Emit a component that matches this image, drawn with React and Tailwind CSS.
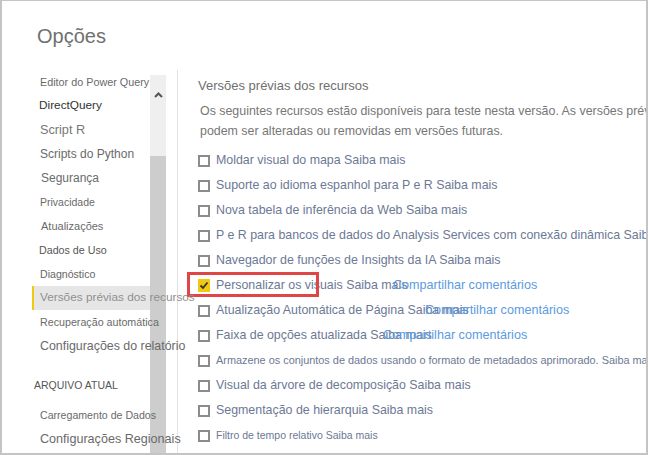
const navItems = [
  { label: 'Editor do Power Query', cls: 'text-[10.8px] text-[#6a6a6a] pl-[8px]' },
  { label: 'DirectQuery', cls: 'text-[11.8px] text-[#333] pl-[7px]' },
  { label: 'Script R', cls: 'text-[12.7px] text-[#777] pl-[8px]' },
  { label: 'Scripts do Python', cls: 'text-[12px] text-[#6a6a6a] pl-[8px]' },
  { label: 'Segurança', cls: 'text-[12px] text-[#6a6a6a] pl-[9px]' },
  { label: 'Privacidade', cls: 'text-[10.5px] text-[#6a6a6a] pl-[8px]' },
  { label: 'Atualizações', cls: 'text-[11px] text-[#6a6a6a] pl-[9px]' },
  { label: 'Dados de Uso', cls: 'text-[10.7px] text-[#555] pl-[7px]' },
  { label: 'Diagnóstico', cls: 'text-[10.6px] text-[#666] pl-[8px]' },
  { label: 'Versões prévias dos recursos', cls: 'text-[11.8px] text-[#909090] pl-[6px]', selected: true },
  { label: 'Recuperação automática', cls: 'text-[10.7px] text-[#6a6a6a] pl-[8px]' },
  { label: 'Configurações do relatório', cls: 'text-[12.4px] text-[#6a6a6a] pl-[8px]' },
];

const features = [
  { label: 'Moldar visual do mapa Saiba mais' },
  { label: 'Suporte ao idioma espanhol para P e R Saiba mais' },
  { label: 'Nova tabela de inferência da Web Saiba mais' },
  { label: 'P e R para bancos de dados do Analysis Services com conexão dinâmica Saiba mais' },
  { label: 'Navegador de funções de Insights da IA Saiba mais' },
  { label: 'Personalizar os visuais Saiba mais', checked: true, link: 'left-[215px]', highlight: true },
  { label: 'Atualização Automática de Página Saiba mais', link: 'left-[247px]' },
  { label: 'Faixa de opções atualizada Saiba mais', link: 'left-[205px]' },
  { label: 'Armazene os conjuntos de dados usando o formato de metadados aprimorado. Saiba mais', small: 'text-[10.9px]' },
  { label: 'Visual da árvore de decomposição Saiba mais' },
  { label: 'Segmentação de hierarquia Saiba mais' },
  { label: 'Filtro de tempo relativo Saiba mais', small: 'text-[10.5px]' },
];

function Checkbox({ checked }) {
  if (checked) {
    return (
      <span className="w-[12px] h-[13px] bg-[#f2c811] flex items-center justify-center shrink-0">
        <svg width="10" height="9" viewBox="0 0 10 9">
          <path d="M1.5 4.5 L4 7 L8.5 1.5" fill="none" stroke="#333" strokeWidth="1.8" />
        </svg>
      </span>
    );
  }
  return <span className="w-[12px] h-[12px] border-2 border-[#8c8c8c] bg-white shrink-0" />;
}

export default function App() {
  return (
    <div className="w-[648px] h-[455px] bg-white border-t border-l-2 border-r-2 border-b-2 border-[#c4c4c4] overflow-hidden font-['Liberation_Sans',Arial,sans-serif]">
      {/* Title */}
      <div className="h-[69px] pl-[35px] pt-[25px]">
        <h1 className="text-[20px] leading-[20px] text-[#707070]">Opções</h1>
      </div>

      <div className="flex h-[383px]">
        {/* Left nav */}
        <div className="w-[175px] flex shrink-0">
          <div className="ml-[30px] w-[118px] relative z-10">
            {navItems.map((item) => (
              <div
                key={item.label}
                className={`h-6 flex items-center whitespace-nowrap leading-none ${item.cls} ${
                  item.selected ? 'bg-[#e6e6e6] border-l-2 border-[#f2c811]' : ''
                }`}
              >
                {item.label}
              </div>
            ))}
            <div className="mt-[15px] h-6 flex items-center pl-[2px] text-[10.5px] leading-none text-[#555] whitespace-nowrap">
              ARQUIVO ATUAL
            </div>
            <div className="mt-[6px] h-6 flex items-center pl-[8px] text-[10.6px] leading-none text-[#6a6a6a] whitespace-nowrap">
              Carregamento de Dados
            </div>
            <div className="h-6 flex items-center pl-[8px] text-[12.6px] leading-none text-[#6a6a6a] whitespace-nowrap">
              Configurações Regionais
            </div>
          </div>

          {/* Scrollbar */}
          <div className="w-[16px] mt-[5px] flex flex-col">
            <div className="h-[81px] bg-[#efefef] flex justify-center pt-[17px]">
              <svg width="9" height="6" viewBox="0 0 9 6">
                <path d="M1 5 L4.5 1.5 L8 5" fill="none" stroke="#555" strokeWidth="2" />
              </svg>
            </div>
            <div className="flex-1 bg-[#cdcdcd]" />
          </div>
        </div>

        {/* Separator */}
        <div className="w-px bg-[#e2e2e2] shrink-0" />

        {/* Right content */}
        <div className="flex-1 overflow-hidden">
          <div className="h-[31px] flex items-center pl-[20px] text-[13px] leading-none text-[#707070] whitespace-nowrap">
            Versões prévias dos recursos
          </div>
          <div className="pl-[22px] text-[12.4px] leading-[20px] text-[#777] whitespace-nowrap">
            <div>Os seguintes recursos estão disponíveis para teste nesta versão. As versões prévias dos recursos</div>
            <div>podem ser alteradas ou removidas em versões futuras.</div>
          </div>
          <div className="mt-[7px]">
            {features.map((f) => (
              <div key={f.label} className="relative h-[25px] flex items-center pl-[20px] gap-[6px] whitespace-nowrap">
                <Checkbox checked={f.checked} />
                <span className={`${f.small || 'text-[12.4px]'} leading-none text-[#6c7995]`}>{f.label}</span>
                {f.link && (
                  <span className={`absolute ${f.link} top-0 h-[25px] flex items-center text-[12.6px] leading-none text-[#5b9be0]`}>
                    Compartilhar comentários
                  </span>
                )}
                {f.highlight && (
                  <span className="absolute left-[9px] top-[-1px] w-[132px] h-[25px] border-[3px] border-[#e04646]" />
                )}
              </div>
            ))}
          </div>
        </div>
      </div>
    </div>
  );
}
